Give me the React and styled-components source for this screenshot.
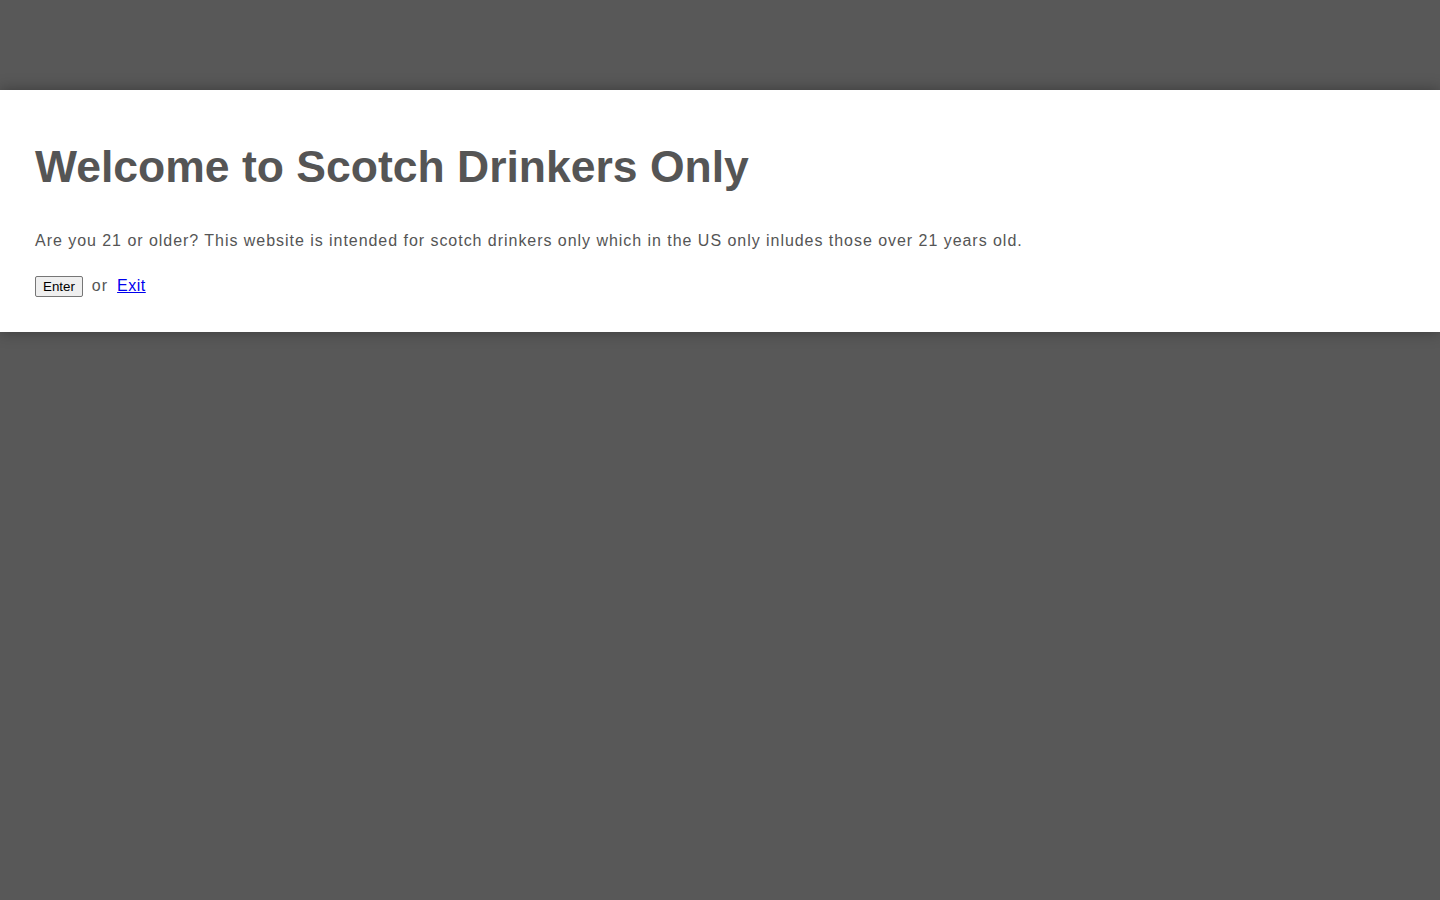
import React from "react";
import styled, { createGlobalStyle } from "styled-components";

const GlobalStyle = createGlobalStyle`
  html, body {
    margin: 0;
    padding: 0;
    height: 100%;
    background: #585858;
  }
`;

function App() {
  return (
    <>
      <GlobalStyle />
      <Overlay>
        <Modal>
          <Title>Welcome to Scotch Drinkers Only</Title>
          <Message>
            Are you 21 or older? This website is intended for scotch drinkers
            only which in the US only inludes those over 21 years old.
          </Message>
          <Actions>
            <EnterButton type="button">Enter</EnterButton>
            <Or>or</Or>
            <ExitLink href="#">Exit</ExitLink>
          </Actions>
        </Modal>
      </Overlay>
    </>
  );
}

const Overlay = styled.div`
  min-height: 900px;
  padding-top: 90px;
  box-sizing: border-box;
`;

const Modal = styled.div`
  background: #fff;
  padding: 50px 35px 35px;
  box-shadow: 0 0 14px rgba(0, 0, 0, 0.35);
  font-family: "Liberation Sans", Arial, sans-serif;
`;

const Title = styled.h1`
  margin: 0;
  font-size: 44.5px;
  font-weight: 700;
  color: #555;
  line-height: 54px;
`;

const Message = styled.p`
  margin: 35px 0 0;
  font-size: 16px;
  letter-spacing: 0.96px;
  color: #555;
  line-height: 1.5;
`;

const Actions = styled.div`
  display: flex;
  align-items: center;
  gap: 9px;
  margin-top: 22px;
  height: 22px;
`;

const EnterButton = styled.button`
  font-family: Arial, "Liberation Sans", sans-serif;
  font-size: 13.33px;
  padding: 2px 7px;
  border: 1px solid #767676;
  border-radius: 2px;
  background: #efefef;
  color: #000;
`;

const Or = styled.span`
  font-size: 16px;
  color: #555;
  letter-spacing: 1px;
`;

const ExitLink = styled.a`
  font-size: 16px;
  color: #0000ee;
  text-decoration: underline;
  letter-spacing: 0.5px;
`;

export default App;
